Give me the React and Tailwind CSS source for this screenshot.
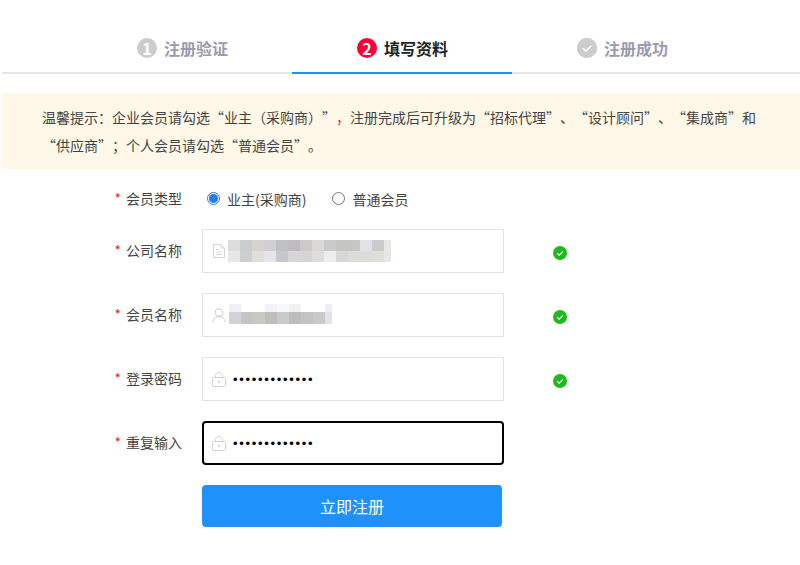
import React from "react";

const companyBlur = [
    ["#dedddb", "#c8cdd0", "#d5d3cc", "#cfced2", "#bfc1c4", "#c0bbbf", "#cbcbcb", "#d9d8d6", "#cacaca", "#c5c5c3", "#c6c6c4", "#e2e3e7", "#cbcbcb", "#e8e9e7"],
    ["#e7e6e8", "#cfcfd0", "#dfdfdd", "#e8e4ec", "#c6c7ca", "#d5d6da", "#d5d6d4", "#dfdcdd", "#eeeeee", "#d7d7d5", "#dcdcd8", "#dddcd8", "#dfdfda", "#e5e7e5"],
];

const memberBlur = [
    ["#f1f0f5", "#ffffff", "#ffffff", "#f3f2f4", "#f8f8f8", "#f2f1f3", "#ffffff", "#ffffff", "#efeef3"],
    ["#d3d1d9", "#c4c4c2", "#c9c8c1", "#bfbdbe", "#c6ccc6", "#bebcbf", "#c4c3c1", "#c9c9c5", "#e4e3ea"],
];

function Blur({ rows, width, rowHeights }) {
    let y = 0;
    return (
        <svg width={width} height={rowHeights[0] + rowHeights[1]} className="shrink-0">
            {rows.map((row, r) => {
                const top = y;
                y += rowHeights[r];
                return row.map((color, c) => (
                    <rect key={c} x={c * 12} y={top} width="12" height={rowHeights[r]} fill={color} />
                ));
            })}
        </svg>
    );
}

function Step({ badge, title, active, muted }) {
    return (
        <div className={`flex h-[74px] w-[220px] items-center justify-center gap-[7px] border-b-2 pl-[1px] pt-6 ${active ? "border-[#1e92fa]" : "border-transparent"}`}>
            <div className={`flex h-5 w-5 items-center justify-center rounded-full text-base font-bold text-white ${active ? "bg-[#ff0036]" : "bg-[#cccccc]"}`}>
                {badge}
            </div>
            <span className={`text-base font-bold ${muted ? "text-[#9b9bb0]" : "text-[#222222]"}`}>{title}</span>
        </div>
    );
}

function CheckBadge({ size = 14, color = "#1fb81f" }) {
    return (
        <svg width={size} height={size} viewBox="0 0 14 14">
            <circle cx="7" cy="7" r="7" fill={color} />
            <path d="M4 7.2 L6.2 9.2 L10 5.4" fill="none" stroke="#ffffff" strokeWidth="1.1" />
        </svg>
    );
}

function DocIcon() {
    return (
        <svg width="14" height="14" viewBox="0 0 14 14" fill="none" stroke="#d6d6d6" strokeWidth="1" className="ml-[1px]">
            <path d="M.5 .5 H8 L11.5 4 V13.5 H.5 Z" />
            <path d="M8 .5 V4 H11.5 M3 5.5 H6 M3 8 H9 M3 10.5 H9" />
        </svg>
    );
}

function UserIcon() {
    return (
        <svg width="14" height="14" viewBox="0 0 14 14" fill="none" stroke="#d0d0d0" strokeWidth="1">
            <circle cx="7" cy="4.5" r="3.8" />
            <path d="M.7 14 C1 10.5 3.5 8.5 7 8.5 C10.5 8.5 13 10.5 13.3 14" />
        </svg>
    );
}

function LockIcon() {
    return (
        <svg width="14" height="15" viewBox="0 0 14 15" fill="none" stroke="#d4d4d4" strokeWidth="1">
            <rect x=".5" y="5.5" width="13" height="9" rx="1" />
            <path d="M3.5 5.5 V3.8 C3.5 1.8 5 .5 7 .5 C9 .5 10.5 1.8 10.5 3.8 V5.5" />
            <circle cx="7" cy="10" r=".8" fill="#d4d4d4" />
        </svg>
    );
}

function Label({ children, raised }) {
    return (
        <div className={`flex w-[180px] justify-end text-sm text-[#444444] ${raised ? "mb-[2px]" : ""}`}>
            <span className="mr-[5px] text-[#f5222d]">*</span>
            {children}
        </div>
    );
}

function Field({ label, icon, focused, valid, children }) {
    return (
        <div className="flex items-center">
            <Label raised>{label}</Label>
            <div className={`ml-5 flex h-11 w-[302px] items-center ${focused ? "rounded border-2 border-black pl-2" : "border border-[#e2e2e2] pl-[9px]"}`}>
                {icon}
                {children}
            </div>
            {valid && (
                <div className="ml-[49px] mt-1 flex">
                    <CheckBadge />
                </div>
            )}
        </div>
    );
}

function Radio({ checked, children }) {
    return (
        <div className="flex items-center gap-[7px] text-sm text-[#444444]">
            <div className={`mb-[2px] flex h-[13px] w-[13px] items-center justify-center rounded-full border ${checked ? "border-[#1e7ff0]" : "border-[#767676]"}`}>
                {checked && <div className="h-[9px] w-[9px] rounded-full bg-[#1e7ff0]"></div>}
            </div>
            <span className="leading-5">{children}</span>
        </div>
    );
}

function Dots() {
    return <span className="ml-[7px] text-[13px] leading-none tracking-[1.7px] text-black [font-family:'Liberation_Sans',sans-serif]">•••••••••••••</span>;
}

export default function App() {
    return (
        <div lang="zh-CN" className="h-[565px] w-[800px] overflow-hidden bg-white pl-[2px] [font-family:'Noto_Sans_CJK_SC',sans-serif]">
            {/* Steps */}
            <div className="flex border-b-2 border-[#e5e5e5] pl-[70px]">
                <div className="-mb-[2px] flex">
                    <Step badge="1" title="注册验证" muted />
                    <Step badge="2" title="填写资料" active />
                    <Step badge={<CheckBadge size={20} color="#cccccc" />} title="注册成功" muted />
                </div>
            </div>

            {/* Notice */}
            <div className="mt-[19px] bg-[#fff8e8] px-10 py-[10px] text-sm leading-7 text-[#444444] [text-spacing-trim:space-all]">
                温馨提示：企业会员请勾选“业主（采购商）”<span className="text-[#f5222d]">，</span>注册完成后可升级为“招标代理”、“设计顾问”、“集成商”和
                <br />
                “供应商”；个人会员请勾选“普通会员”。
            </div>

            {/* Form */}
            <div className="mt-5 flex flex-col gap-5">
                <div className="flex h-5 items-center">
                    <Label raised>会员类型</Label>
                    <div className="ml-[25px] flex items-center gap-[26px]">
                        <Radio checked>业主(采购商)</Radio>
                        <Radio>普通会员</Radio>
                    </div>
                </div>
                <Field label="公司名称" icon={<DocIcon />} valid>
                    <div className="ml-[1px]">
                        <Blur rows={companyBlur} width={163} rowHeights={[11, 11]} />
                    </div>
                </Field>
                <Field label="会员名称" icon={<UserIcon />} valid>
                    <div className="mb-[2px] ml-[3px]">
                        <Blur rows={memberBlur} width={103} rowHeights={[8, 12]} />
                    </div>
                </Field>
                <Field label="登录密码" icon={<LockIcon />} valid>
                    <Dots />
                </Field>
                <Field label="重复输入" icon={<LockIcon />} focused>
                    <Dots />
                </Field>
                <div className="ml-[200px]">
                    <button className="h-[42px] w-[300px] rounded bg-[#1e92fa] text-base text-white">立即注册</button>
                </div>
            </div>
        </div>
    );
}
